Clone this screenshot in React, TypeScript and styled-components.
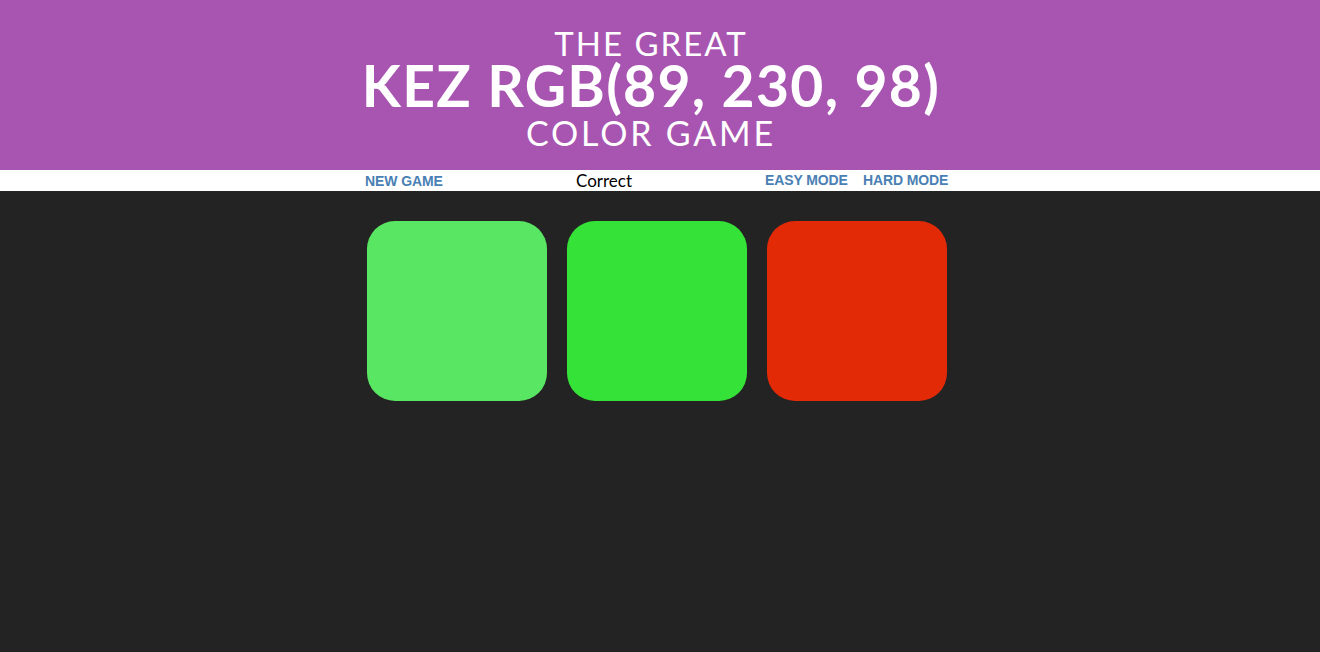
import React from "react";
import styled, { createGlobalStyle } from "styled-components";

const Global = createGlobalStyle`
  html, body { margin: 0; padding: 0; background: #232323; }
  body { font-family: "Lato", "Liberation Sans", sans-serif; }
`;

const Header = styled.header`
  background: #a855b1;
  height: 170px;
  box-sizing: border-box;
  padding-top: 28px;
  display: flex;
  flex-direction: column;
  align-items: center;
  color: #ffffff;
  font-family: "Lato", "Liberation Sans", sans-serif;
  text-transform: uppercase;
`;

const Line = styled.div<{ $size: number; $weight: number; $spacing: number; $lh: number }>`
  font-size: ${(p) => p.$size}px;
  font-weight: ${(p) => p.$weight};
  letter-spacing: ${(p) => p.$spacing}px;
  line-height: ${(p) => p.$lh}px;
  white-space: nowrap;
  margin-right: 18px;
`;

const Stripe = styled.nav`
  background: #ffffff;
  height: 21px;
  display: grid;
  grid-template-columns: 211px 189px auto;
  align-items: center;
  padding-left: calc(50% - 295px);
`;

const Button = styled.button`
  border: none;
  background: none;
  padding: 0 0 2px;
  font-family: "Liberation Sans", Arial, sans-serif;
  font-weight: 700;
  font-size: 14px;
  letter-spacing: -0.1px;
  color: #4a7fb4;
  text-transform: uppercase;
  text-align: left;
  cursor: pointer;
`;

const Message = styled.span`
  font-family: "Lato", sans-serif;
  font-size: 17px;
  line-height: 19px;
  color: #000;
`;

const Modes = styled.div`
  display: flex;
  gap: 15px;
`;

const Board = styled.main`
  display: flex;
  gap: 20px;
  padding-top: 30px;
  padding-left: calc(50% - 293px);
`;

const Square = styled.div<{ $color: string }>`
  width: 180px;
  height: 180px;
  border-radius: 28px;
  background: ${(p) => p.$color};
`;

const Page = styled.div`
  min-height: 652px;
  background: #232323;
`;

export default function App() {
  const colors = ["rgb(89, 230, 98)", "#35e338", "#e22a07"];
  return (
    <Page>
      <Global />
      <Header>
        <Line $size={33} $weight={400} $spacing={2} $lh={30}>The Great</Line>
        <Line $size={57} $weight={700} $spacing={1.3} $lh={55}>Kez RGB(89, 230, 98)</Line>
        <Line $size={34} $weight={400} $spacing={2.8} $lh={40}>Color Game</Line>
      </Header>
      <Stripe>
        <div>
          <Button>New Game</Button>
        </div>
        <Message>Correct</Message>
        <Modes>
          <Button>Easy Mode</Button>
          <Button>Hard Mode</Button>
        </Modes>
      </Stripe>
      <Board>
        {colors.map((c, i) => (
          <Square key={i} $color={c} />
        ))}
      </Board>
    </Page>
  );
}
